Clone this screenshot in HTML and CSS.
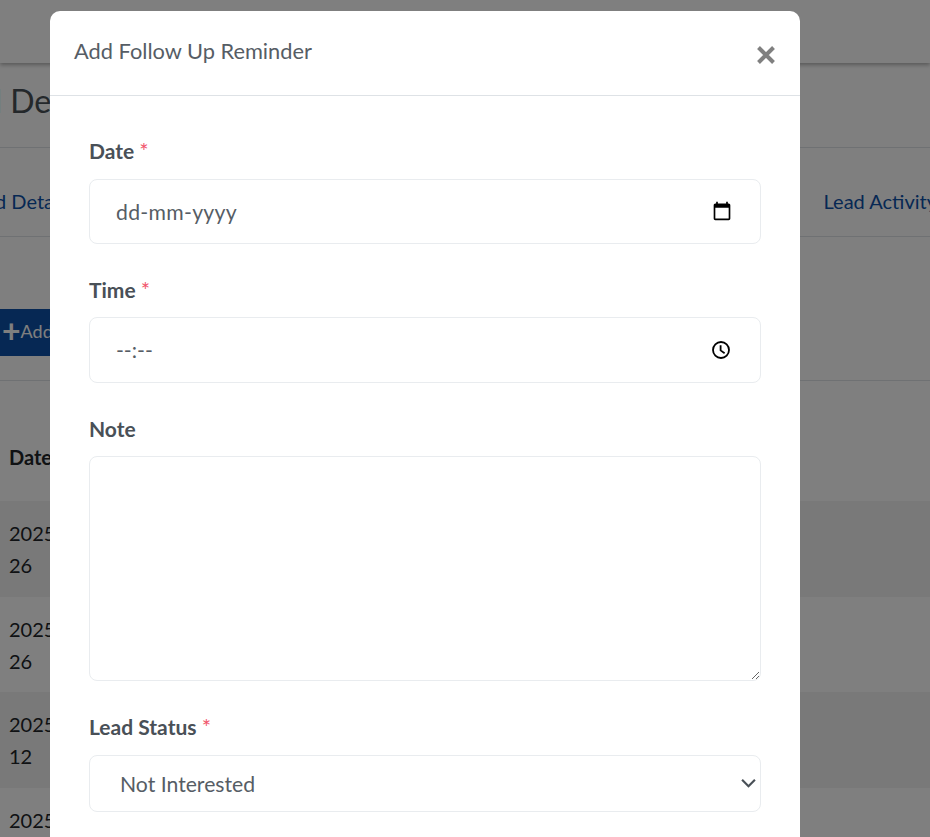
FILE: index.html
```
<!DOCTYPE html>
<html lang="en">
<head>
<meta charset="utf-8">
<title>Add Follow Up Reminder</title>
<link rel="stylesheet" href="styles.css">
</head>
<body>
<div class="page">
  <header class="topbar"></header>
  <h1 class="page-title">Lead Details</h1>
  <nav class="tabs">
    <a class="tab tab-first">Lead Details</a>
    <a class="tab tab-last">Lead Activity</a>
  </nav>
  <div class="toolbar">
    <button class="add-btn" type="button"><span class="plus">+</span>Add</button>
  </div>
  <div class="table">
    <div class="th">Date</div>
    <div class="tr odd">2025-<br>26</div>
    <div class="tr">2025-<br>26</div>
    <div class="tr odd">2025-<br>12</div>
    <div class="tr">2025-<br>12</div>
  </div>
</div>
<div class="backdrop"></div>
<div class="modal" role="dialog">
  <div class="modal-header">
    <h2 class="modal-title">Add Follow Up Reminder</h2>
    <svg class="close" viewBox="0 0 16 16" aria-label="Close"><path d="M2 2 14 14M14 2 2 14"/></svg>
  </div>
  <form class="modal-body">
    <div class="field field-date">
      <label class="label">Date <span class="req">*</span></label>
      <div class="input-wrap">
        <input class="control control-date" type="text" placeholder="dd-mm-yyyy">
        <svg class="icon-calendar" viewBox="0 0 24 24"><path d="M20 3h-1V1h-2v2H7V1H5v2H4c-1.1 0-2 .9-2 2v16c0 1.1.9 2 2 2h16c1.1 0 2-.9 2-2V5c0-1.1-.9-2-2-2zm0 18H4V8h16v13z"/></svg>
      </div>
    </div>
    <div class="field field-time">
      <label class="label">Time <span class="req">*</span></label>
      <div class="input-wrap">
        <input class="control control-time" type="text" placeholder="--:--">
        <svg class="icon-clock" viewBox="0 0 18 18"><circle cx="9" cy="9" r="8"/><path d="M8.6 4.2V9.4L12.6 12.2"/></svg>
      </div>
    </div>
    <div class="field field-note">
      <label class="label">Note</label>
      <textarea class="control note"></textarea>
    </div>
    <div class="field field-status">
      <label class="label">Lead Status <span class="req">*</span></label>
      <div class="input-wrap">
        <select class="control status"><option>Not Interested</option></select>
        <svg class="chevron" viewBox="0 0 14 9"><path d="M1 1.5 7 7.5 13 1.5"/></svg>
      </div>
    </div>
  </form>
</div>
</body>
</html>
```
FILE: styles.css
```
* { box-sizing: border-box; }
html, body { margin: 0; height: 837px; overflow: hidden; }
body { font-family: Lato, "Open Sans", sans-serif; color: #212529; background: #fff; }

.page { height: 837px; overflow: hidden; }
.topbar { height: 63px; background: #fff; box-shadow: 0 2px 4px rgba(0,0,0,.3); }
.page-title { margin: 0 0 0 -64px; height: 85px; padding-top: 18px; font-size: 32px; line-height: 40px; font-weight: 400; color: #495057; border-bottom: 1px solid #dee2e6; }
.tabs { height: 89px; display: flex; justify-content: space-between; align-items: center; padding-top: 18px; margin: 0 -7px 0 -35px; border-bottom: 1px solid #dee2e6; font-size: 20px; }
.tab { color: #0d51a8; white-space: nowrap; }
.toolbar { height: 144px; padding-top: 72px; border-bottom: 1px solid #dee2e6; }
.add-btn { display: flex; align-items: center; height: 47px; width: 120px; border: 0; padding: 0 0 4px 2px; background: #0d51a8; color: #fff; font: 400 18px Lato, sans-serif; }
.plus { font-size: 32px; font-weight: 700; line-height: 1; }
.table { font-size: 20px; line-height: 32px; }
.th { height: 120px; padding: 60px 9px 0; font-weight: 700; }
.tr { height: 95.5px; padding: 16px 9px; }
.odd { background: #f2f2f2; }

.backdrop { position: fixed; inset: 0; background: rgba(0,0,0,.5); }
.modal { position: absolute; left: 50px; top: 11px; width: 750px; height: 900px; background: #fff; border-radius: 10px; }
.modal-header { height: 85px; padding: 0 24px; display: flex; justify-content: space-between; align-items: center; border-bottom: 1px solid #dee2e6; }
.modal-title { margin: 0; font-size: 21.8px; font-weight: 400; line-height: 32px; color: #565d65; position: relative; top: -2px; }
.close { width: 20px; height: 20px; position: relative; top: 2px; fill: none; stroke: #808080; stroke-width: 3.2; }
.modal-body { padding: 39px 39px 0; display: flex; flex-direction: column; }
.field { display: flex; flex-direction: column; margin-bottom: 30px; }
.label { font-size: 21px; font-weight: 700; line-height: 32px; color: #495057; margin-bottom: 12px; }
.field-time .label, .field-note .label { margin-bottom: 11px; }
.req { color: #f1556c; font-weight: 400; font-size: 22px; line-height: 20px; }
.input-wrap { position: relative; }
.control { display: block; width: 100%; border: 1px solid #e9ecef; border-radius: 8px; background: #fff; color: #565d65; font-family: Lato, sans-serif; font-size: 21.2px; padding: 0 50px 0 26px; outline: 0; }
.control::placeholder { color: #565d65; opacity: 1; }
.control-date { height: 65px; letter-spacing: .3px; }
.control-time { height: 66px; }
.note { height: 225px; padding: 0 26px; resize: vertical; }
.status { height: 57px; padding: 0 0 0 30px; appearance: none; }
.icon-calendar { position: absolute; right: 29px; top: 22px; width: 20px; height: 20px; fill: #000; }
.icon-clock { position: absolute; right: 31px; top: 24px; width: 18px; height: 18px; fill: none; stroke: #000; stroke-width: 1.8; }
.chevron { position: absolute; right: 5px; top: 23px; width: 15px; height: 10px; fill: none; stroke: #495057; stroke-width: 2; }
```
